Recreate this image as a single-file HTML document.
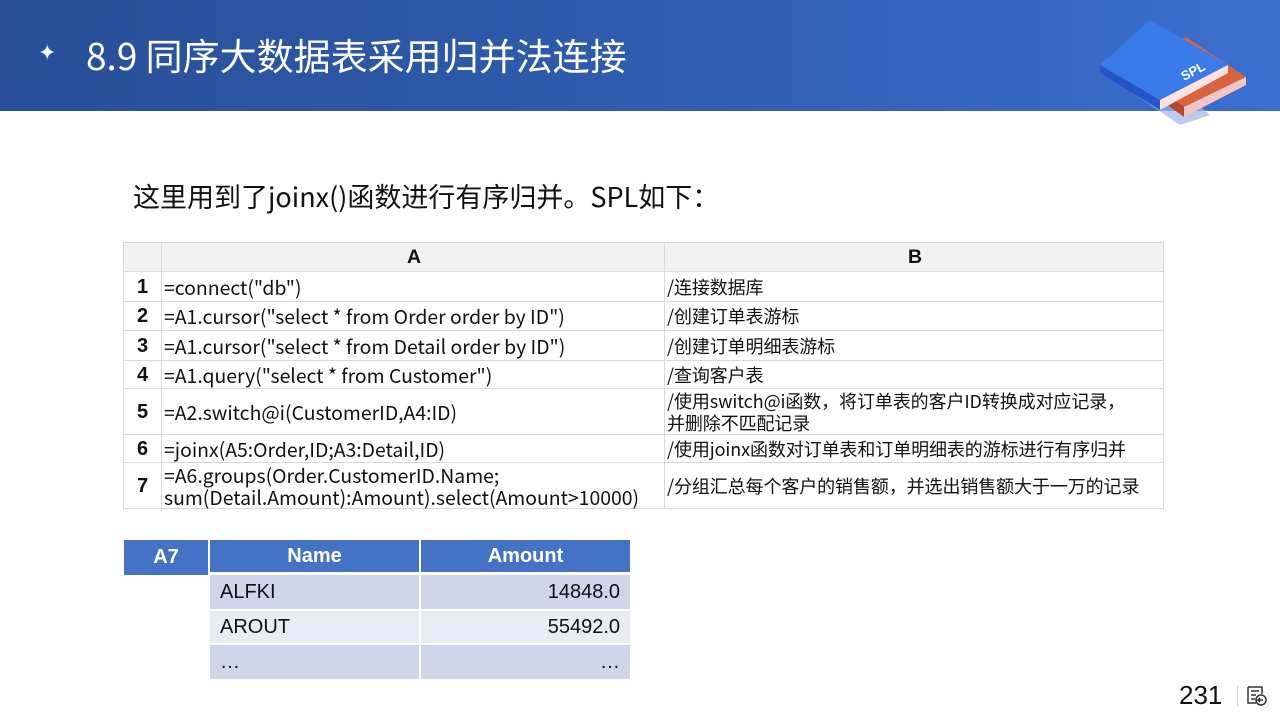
<!DOCTYPE html>
<html><head><meta charset="utf-8"><style>
*{margin:0;padding:0;box-sizing:border-box}
body{width:1280px;height:720px;position:relative;background:#fff;font-family:"Liberation Sans","Noto Sans CJK SC",sans-serif;overflow:hidden}
.hdr{position:absolute;left:0;top:0;width:1280px;height:111px;background:linear-gradient(90deg,#284f98 0%,#2f5cae 50%,#3b6fd0 100%)}
.title{position:absolute;left:86px;top:29px;color:#fff;font-size:37px;font-family:"Noto Sans CJK SC",sans-serif;line-height:50px}
.star{position:absolute;left:38px;top:40px;color:#fff;font-size:22px}
.sub{position:absolute;left:133px;top:176px;font-size:27px;font-family:"Noto Sans CJK SC",sans-serif;color:#111;line-height:40px}
.abs{position:absolute}
.c{position:absolute;border:1px solid #d9d9d9;font-size:19.4px;color:#111;display:flex;align-items:center;font-family:"Noto Sans CJK SC",sans-serif;line-height:22px;padding-left:2px;white-space:nowrap}
.b{font-size:18px;letter-spacing:-0.1px}
.n{justify-content:center;font-weight:bold;padding-left:0;font-family:"Liberation Sans",sans-serif;font-size:20px}
.h{background:#f2f2f2;justify-content:center;font-weight:bold;font-family:"Liberation Sans",sans-serif}
.r{position:absolute;font-size:20px;color:#111;display:flex;align-items:center;padding:0 10px}
</style></head><body>
<div class="hdr"></div>
<div class="star">✦</div>
<div class="title">8.9 同序大数据表采用归并法连接</div>
<svg class="abs" style="left:1100px;top:15px" width="160" height="110" viewBox="0 0 160 110">
<polygon points="0,56 40,40 110,100 80,110" fill="#9fb5e6" opacity="0.7"/>
<polygon points="24,48 86,22 146,62 84,92" fill="#d9623f"/>
<polygon points="24,48 84,92 84,102 24,58" fill="#b8452a"/>
<polygon points="84,92 146,62 146,70 84,102" fill="#f2c5c5"/>
<polygon points="50,5 128,50 60,85 0,50" fill="#3a7bea"/>
<polygon points="0,50 60,85 60,95 0,58" fill="#2454c8"/>
<polygon points="60,85 128,50 128,58 60,95" fill="#fbe3e3"/>
<text x="84" y="66" fill="#fff" font-size="13" font-weight="bold" font-family="Liberation Sans" transform="rotate(-28 84 66)">SPL</text>
</svg>
<div class="sub">这里用到了joinx()函数进行有序归并。SPL如下：</div>

<div class="c h" style="left:123px;top:242px;width:39px;height:30px"></div>
<div class="c h" style="left:161px;top:242px;width:504px;height:30px">A</div>
<div class="c h" style="left:664px;top:242px;width:500px;height:30px">B</div>

<div class="c n" style="left:123px;top:271px;width:39px;height:31px">1</div>
<div class="c" style="left:161px;top:271px;width:504px;height:31px">=connect("db")</div>
<div class="c b" style="left:664px;top:271px;width:500px;height:31px">/连接数据库</div>

<div class="c n" style="left:123px;top:301px;width:39px;height:30px">2</div>
<div class="c" style="left:161px;top:301px;width:504px;height:30px">=A1.cursor("select * from Order order by ID")</div>
<div class="c b" style="left:664px;top:301px;width:500px;height:30px">/创建订单表游标</div>

<div class="c n" style="left:123px;top:330px;width:39px;height:31px">3</div>
<div class="c" style="left:161px;top:330px;width:504px;height:31px">=A1.cursor("select * from Detail order by ID")</div>
<div class="c b" style="left:664px;top:330px;width:500px;height:31px">/创建订单明细表游标</div>

<div class="c n" style="left:123px;top:360px;width:39px;height:29px">4</div>
<div class="c" style="left:161px;top:360px;width:504px;height:29px">=A1.query("select * from Customer")</div>
<div class="c b" style="left:664px;top:360px;width:500px;height:29px">/查询客户表</div>

<div class="c n" style="left:123px;top:388px;width:39px;height:47px">5</div>
<div class="c" style="left:161px;top:388px;width:504px;height:47px">=A2.switch@i(CustomerID,A4:ID)</div>
<div class="c b" style="left:664px;top:388px;width:500px;height:47px">/使用switch@i函数，将订单表的客户ID转换成对应记录，<br>并删除不匹配记录</div>

<div class="c n" style="left:123px;top:434px;width:39px;height:29px">6</div>
<div class="c" style="left:161px;top:434px;width:504px;height:29px">=joinx(A5:Order,ID;A3:Detail,ID)</div>
<div class="c b" style="left:664px;top:434px;width:500px;height:29px">/使用joinx函数对订单表和订单明细表的游标进行有序归并</div>

<div class="c n" style="left:123px;top:462px;width:39px;height:47px">7</div>
<div class="c" style="left:161px;top:462px;width:504px;height:47px">=A6.groups(Order.CustomerID.Name;<br>sum(Detail.Amount):Amount).select(Amount&gt;10000)</div>
<div class="c b" style="left:664px;top:462px;width:500px;height:47px;overflow:hidden">/分组汇总每个客户的销售额，并选出销售额大于一万的记录</div>

<div class="r" style="left:124px;top:540px;width:84px;height:35px;background:#4472c4;color:#fff;font-weight:bold;justify-content:center">A7</div>
<div class="r" style="left:210px;top:540px;width:209px;height:32px;background:#4472c4;color:#fff;font-weight:bold;justify-content:center">Name</div>
<div class="r" style="left:421px;top:540px;width:209px;height:32px;background:#4472c4;color:#fff;font-weight:bold;justify-content:center">Amount</div>
<div class="r" style="left:210px;top:575px;width:209px;height:34px;background:#cfd5ea">ALFKI</div>
<div class="r" style="left:421px;top:575px;width:209px;height:34px;background:#cfd5ea;justify-content:flex-end">14848.0</div>
<div class="r" style="left:210px;top:611px;width:209px;height:32px;background:#e9ebf5">AROUT</div>
<div class="r" style="left:421px;top:611px;width:209px;height:32px;background:#e9ebf5;justify-content:flex-end">55492.0</div>
<div class="r" style="left:210px;top:645px;width:209px;height:34px;background:#cfd5ea">…</div>
<div class="r" style="left:421px;top:645px;width:209px;height:34px;background:#cfd5ea;justify-content:flex-end">…</div>

<div class="abs" style="left:1179px;top:680px;font-size:26px;color:#111">231</div>
<div class="abs" style="left:1237px;top:686px;width:1px;height:20px;background:#c5d3ee"></div>
<svg class="abs" style="left:1246px;top:685px" width="22" height="22" viewBox="0 0 22 22" fill="none" stroke="#333" stroke-width="1.5">
<path d="M2 2h14v7M2 2v16h8M5 6h8M5 10h5M5 14h4"/><circle cx="15" cy="15" r="5"/><path d="M17 15h-5l2-2M12 15l2 2"/></svg>
</body></html>
